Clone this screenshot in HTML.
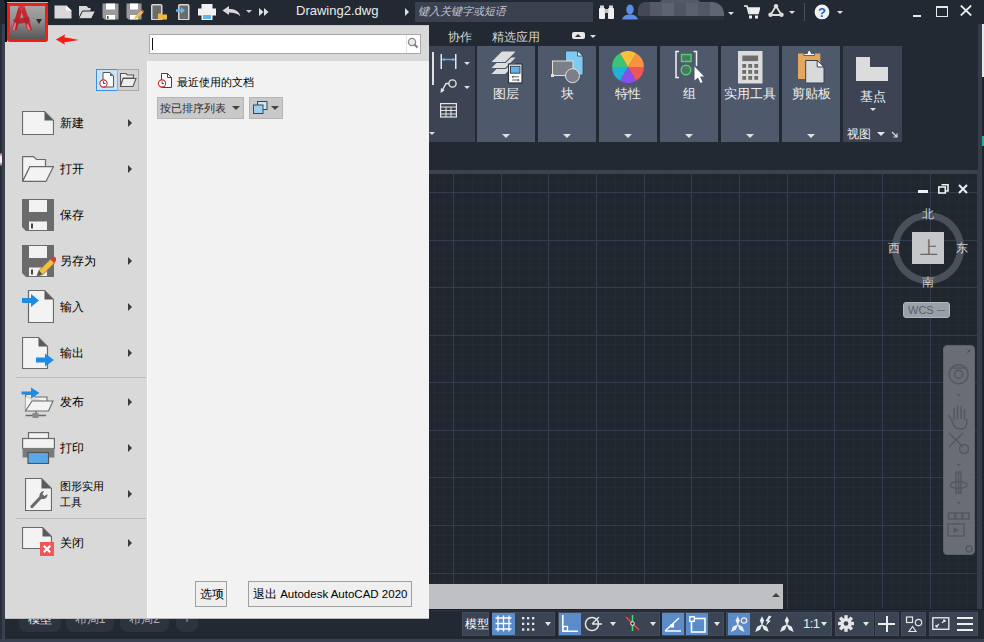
<!DOCTYPE html>
<html><head><meta charset="utf-8"><style>
*{box-sizing:border-box}
html,body{margin:0;padding:0;width:984px;height:642px;overflow:hidden;background:#222733;font-family:"Liberation Sans",sans-serif;font-size:12px}
.a{position:absolute}
.panel{position:absolute;top:46px;height:96px;background:#4e596c}
.plabel{position:absolute;left:0;right:0;top:40px;text-align:center;color:#f0f0f0;font-size:12.5px;line-height:16px;white-space:nowrap}
.pdrop{position:absolute;left:50%;margin-left:-4px;top:88px;width:0;height:0;border-left:4px solid transparent;border-right:4px solid transparent;border-top:4px solid #e0e0e0}
.mi{position:absolute;left:60px;color:#000;font-size:11.5px;line-height:15px;font-weight:500}
.marr{position:absolute;left:128px;width:0;height:0;border-top:4px solid transparent;border-bottom:4px solid transparent;border-left:4px solid #3a3a3a}
.sbg{position:absolute;top:612px;height:24px;background:#3b4453;box-shadow:inset 0 0 0 1px #444c5b}
.sbl{position:absolute;top:613px;height:22px;background:#5b8bc8}
.dd{position:absolute;width:0;height:0;border-left:3px solid transparent;border-right:3px solid transparent;border-top:3px solid #e0e0e0}
.sdd{position:absolute;top:622px;width:0;height:0;border-left:3.5px solid transparent;border-right:3.5px solid transparent;border-top:4px solid #e6e6e6}
</style></head><body>

<div class="a" style="left:0;top:0;width:984px;height:24px;background:#222932"></div>
<div class="a" style="left:0;top:24px;width:984px;height:146px;background:#222932"></div>
<div class="a" style="left:0;top:170px;width:978px;height:4px;background:#3a4250"></div>
<svg class="a" style="left:5px;top:174px" width="973" height="435" shape-rendering="crispEdges"><rect width="973" height="435" fill="#21272f"/><rect x="0" y="0" width="1" height="435" fill="#252a33"/><rect x="10" y="0" width="1" height="435" fill="#252a33"/><rect x="29" y="0" width="1" height="435" fill="#252a33"/><rect x="38" y="0" width="1" height="435" fill="#252a33"/><rect x="48" y="0" width="1" height="435" fill="#252a33"/><rect x="57" y="0" width="1" height="435" fill="#252a33"/><rect x="76" y="0" width="1" height="435" fill="#252a33"/><rect x="86" y="0" width="1" height="435" fill="#252a33"/><rect x="95" y="0" width="1" height="435" fill="#252a33"/><rect x="105" y="0" width="1" height="435" fill="#252a33"/><rect x="124" y="0" width="1" height="435" fill="#252a33"/><rect x="133" y="0" width="1" height="435" fill="#252a33"/><rect x="143" y="0" width="1" height="435" fill="#252a33"/><rect x="153" y="0" width="1" height="435" fill="#252a33"/><rect x="172" y="0" width="1" height="435" fill="#252a33"/><rect x="181" y="0" width="1" height="435" fill="#252a33"/><rect x="191" y="0" width="1" height="435" fill="#252a33"/><rect x="200" y="0" width="1" height="435" fill="#252a33"/><rect x="219" y="0" width="1" height="435" fill="#252a33"/><rect x="229" y="0" width="1" height="435" fill="#252a33"/><rect x="238" y="0" width="1" height="435" fill="#252a33"/><rect x="248" y="0" width="1" height="435" fill="#252a33"/><rect x="267" y="0" width="1" height="435" fill="#252a33"/><rect x="276" y="0" width="1" height="435" fill="#252a33"/><rect x="286" y="0" width="1" height="435" fill="#252a33"/><rect x="295" y="0" width="1" height="435" fill="#252a33"/><rect x="314" y="0" width="1" height="435" fill="#252a33"/><rect x="324" y="0" width="1" height="435" fill="#252a33"/><rect x="334" y="0" width="1" height="435" fill="#252a33"/><rect x="343" y="0" width="1" height="435" fill="#252a33"/><rect x="362" y="0" width="1" height="435" fill="#252a33"/><rect x="372" y="0" width="1" height="435" fill="#252a33"/><rect x="381" y="0" width="1" height="435" fill="#252a33"/><rect x="391" y="0" width="1" height="435" fill="#252a33"/><rect x="410" y="0" width="1" height="435" fill="#252a33"/><rect x="419" y="0" width="1" height="435" fill="#252a33"/><rect x="429" y="0" width="1" height="435" fill="#252a33"/><rect x="438" y="0" width="1" height="435" fill="#252a33"/><rect x="457" y="0" width="1" height="435" fill="#252a33"/><rect x="467" y="0" width="1" height="435" fill="#252a33"/><rect x="476" y="0" width="1" height="435" fill="#252a33"/><rect x="486" y="0" width="1" height="435" fill="#252a33"/><rect x="505" y="0" width="1" height="435" fill="#252a33"/><rect x="514" y="0" width="1" height="435" fill="#252a33"/><rect x="524" y="0" width="1" height="435" fill="#252a33"/><rect x="534" y="0" width="1" height="435" fill="#252a33"/><rect x="553" y="0" width="1" height="435" fill="#252a33"/><rect x="562" y="0" width="1" height="435" fill="#252a33"/><rect x="572" y="0" width="1" height="435" fill="#252a33"/><rect x="581" y="0" width="1" height="435" fill="#252a33"/><rect x="600" y="0" width="1" height="435" fill="#252a33"/><rect x="610" y="0" width="1" height="435" fill="#252a33"/><rect x="619" y="0" width="1" height="435" fill="#252a33"/><rect x="629" y="0" width="1" height="435" fill="#252a33"/><rect x="648" y="0" width="1" height="435" fill="#252a33"/><rect x="657" y="0" width="1" height="435" fill="#252a33"/><rect x="667" y="0" width="1" height="435" fill="#252a33"/><rect x="676" y="0" width="1" height="435" fill="#252a33"/><rect x="695" y="0" width="1" height="435" fill="#252a33"/><rect x="705" y="0" width="1" height="435" fill="#252a33"/><rect x="715" y="0" width="1" height="435" fill="#252a33"/><rect x="724" y="0" width="1" height="435" fill="#252a33"/><rect x="743" y="0" width="1" height="435" fill="#252a33"/><rect x="753" y="0" width="1" height="435" fill="#252a33"/><rect x="762" y="0" width="1" height="435" fill="#252a33"/><rect x="772" y="0" width="1" height="435" fill="#252a33"/><rect x="791" y="0" width="1" height="435" fill="#252a33"/><rect x="800" y="0" width="1" height="435" fill="#252a33"/><rect x="810" y="0" width="1" height="435" fill="#252a33"/><rect x="819" y="0" width="1" height="435" fill="#252a33"/><rect x="838" y="0" width="1" height="435" fill="#252a33"/><rect x="848" y="0" width="1" height="435" fill="#252a33"/><rect x="857" y="0" width="1" height="435" fill="#252a33"/><rect x="867" y="0" width="1" height="435" fill="#252a33"/><rect x="886" y="0" width="1" height="435" fill="#252a33"/><rect x="895" y="0" width="1" height="435" fill="#252a33"/><rect x="905" y="0" width="1" height="435" fill="#252a33"/><rect x="915" y="0" width="1" height="435" fill="#252a33"/><rect x="934" y="0" width="1" height="435" fill="#252a33"/><rect x="943" y="0" width="1" height="435" fill="#252a33"/><rect x="953" y="0" width="1" height="435" fill="#252a33"/><rect x="962" y="0" width="1" height="435" fill="#252a33"/><rect x="0" y="8" width="973" height="1" fill="#252a33"/><rect x="0" y="27" width="973" height="1" fill="#252a33"/><rect x="0" y="37" width="973" height="1" fill="#252a33"/><rect x="0" y="46" width="973" height="1" fill="#252a33"/><rect x="0" y="56" width="973" height="1" fill="#252a33"/><rect x="0" y="75" width="973" height="1" fill="#252a33"/><rect x="0" y="84" width="973" height="1" fill="#252a33"/><rect x="0" y="94" width="973" height="1" fill="#252a33"/><rect x="0" y="104" width="973" height="1" fill="#252a33"/><rect x="0" y="123" width="973" height="1" fill="#252a33"/><rect x="0" y="132" width="973" height="1" fill="#252a33"/><rect x="0" y="142" width="973" height="1" fill="#252a33"/><rect x="0" y="151" width="973" height="1" fill="#252a33"/><rect x="0" y="170" width="973" height="1" fill="#252a33"/><rect x="0" y="180" width="973" height="1" fill="#252a33"/><rect x="0" y="189" width="973" height="1" fill="#252a33"/><rect x="0" y="199" width="973" height="1" fill="#252a33"/><rect x="0" y="218" width="973" height="1" fill="#252a33"/><rect x="0" y="227" width="973" height="1" fill="#252a33"/><rect x="0" y="237" width="973" height="1" fill="#252a33"/><rect x="0" y="246" width="973" height="1" fill="#252a33"/><rect x="0" y="265" width="973" height="1" fill="#252a33"/><rect x="0" y="275" width="973" height="1" fill="#252a33"/><rect x="0" y="285" width="973" height="1" fill="#252a33"/><rect x="0" y="294" width="973" height="1" fill="#252a33"/><rect x="0" y="313" width="973" height="1" fill="#252a33"/><rect x="0" y="323" width="973" height="1" fill="#252a33"/><rect x="0" y="332" width="973" height="1" fill="#252a33"/><rect x="0" y="342" width="973" height="1" fill="#252a33"/><rect x="0" y="361" width="973" height="1" fill="#252a33"/><rect x="0" y="370" width="973" height="1" fill="#252a33"/><rect x="0" y="380" width="973" height="1" fill="#252a33"/><rect x="0" y="389" width="973" height="1" fill="#252a33"/><rect x="0" y="408" width="973" height="1" fill="#252a33"/><rect x="0" y="418" width="973" height="1" fill="#252a33"/><rect x="0" y="427" width="973" height="1" fill="#252a33"/><rect x="19" y="0" width="1" height="435" fill="#353c4e"/><rect x="67" y="0" width="1" height="435" fill="#353c4e"/><rect x="114" y="0" width="1" height="435" fill="#353c4e"/><rect x="162" y="0" width="1" height="435" fill="#353c4e"/><rect x="210" y="0" width="1" height="435" fill="#353c4e"/><rect x="257" y="0" width="1" height="435" fill="#353c4e"/><rect x="305" y="0" width="1" height="435" fill="#353c4e"/><rect x="353" y="0" width="1" height="435" fill="#353c4e"/><rect x="400" y="0" width="1" height="435" fill="#353c4e"/><rect x="448" y="0" width="1" height="435" fill="#353c4e"/><rect x="496" y="0" width="1" height="435" fill="#353c4e"/><rect x="543" y="0" width="1" height="435" fill="#353c4e"/><rect x="591" y="0" width="1" height="435" fill="#353c4e"/><rect x="639" y="0" width="1" height="435" fill="#353c4e"/><rect x="686" y="0" width="1" height="435" fill="#353c4e"/><rect x="734" y="0" width="1" height="435" fill="#353c4e"/><rect x="782" y="0" width="1" height="435" fill="#353c4e"/><rect x="829" y="0" width="1" height="435" fill="#353c4e"/><rect x="877" y="0" width="1" height="435" fill="#353c4e"/><rect x="925" y="0" width="1" height="435" fill="#353c4e"/><rect x="972" y="0" width="1" height="435" fill="#353c4e"/><rect x="0" y="18" width="973" height="1" fill="#353c4e"/><rect x="0" y="66" width="973" height="1" fill="#353c4e"/><rect x="0" y="113" width="973" height="1" fill="#353c4e"/><rect x="0" y="161" width="973" height="1" fill="#353c4e"/><rect x="0" y="208" width="973" height="1" fill="#353c4e"/><rect x="0" y="256" width="973" height="1" fill="#353c4e"/><rect x="0" y="303" width="973" height="1" fill="#353c4e"/><rect x="0" y="351" width="973" height="1" fill="#353c4e"/><rect x="0" y="399" width="973" height="1" fill="#353c4e"/></svg>
<div class="a" style="left:978px;top:24px;width:4px;height:612px;background:#363d4a"></div>
<div class="a" style="left:982px;top:24px;width:2px;height:612px;background:#1f232b"></div>
<div class="a" style="left:982px;top:24px;width:2px;height:53px;background:#e8e8e8"></div>
<div class="a" style="left:982px;top:136px;width:2px;height:10px;background:#20b0a0"></div>
<div class="a" style="left:0;top:609px;width:984px;height:33px;background:#222932"></div>
<div class="a" style="left:429px;top:609px;width:555px;height:1px;background:#1a1e26"></div>
<div class="a" style="left:429px;top:610px;width:549px;height:1px;background:#2c323e"></div>
<div class="a" style="left:0;top:639px;width:984px;height:3px;background:#394050"></div>
<div class="a" style="left:0;top:24px;width:5px;height:615px;background:#282d38"></div>
<div class="a" style="left:1.5px;top:24px;width:3.5px;height:615px;background:#394050"></div>
<div class="a" style="left:0;top:153px;width:1.5px;height:13px;background:linear-gradient(#c04040,#f0f0f0 30%,#f0f0f0 70%,#a03040)"></div>
<svg class="a" style="left:54px;top:5px" width="18" height="14" viewBox="0 0 18 14" ><path d="M0.5 0.5H12.5L17.5 5.5V13.5H0.5Z" fill="#d9d9d9"/><path d="M12 0.5L17.5 5.5H12Z" fill="#ffffff"/></svg>
<svg class="a" style="left:78px;top:5px" width="18" height="15" viewBox="0 0 18 15" ><path d="M1 1H8.5L10.5 3H12.5V7H4.5L1 13Z" fill="#d9d9d9"/><path d="M4.5 6H17.5L13.5 13.8H0.5Z" fill="#d9d9d9" stroke="#1d212a" stroke-width="1"/></svg>
<svg class="a" style="left:102px;top:3px" width="17" height="17" viewBox="0 0 17 17" ><path d="M0.5 0.5H16.5V16.5H2.5L0.5 14.5Z" fill="#9a9a9a"/><rect x="4" y="0.5" width="9" height="6" fill="#fff"/><rect x="4" y="12" width="9" height="4.5" fill="#fff"/><rect x="5" y="13" width="1.5" height="3" fill="#555"/></svg>
<svg class="a" style="left:126px;top:3px" width="18" height="17" viewBox="0 0 18 17" ><path d="M0.5 0.5H15.5V16.5H2.5L0.5 14.5Z" fill="#9a9a9a"/><rect x="4" y="0.5" width="8" height="6" fill="#fff"/><rect x="4" y="12" width="8" height="4.5" fill="#fff"/><path d="M8 16.5L9.5 13L15.5 7.5L17.5 9.5L11.5 15Z" fill="#f0c040"/><path d="M15.5 7.5L16.5 6.5L18 8L17.5 9.5Z" fill="#e04050"/></svg>
<svg class="a" style="left:151px;top:4px" width="17" height="16" viewBox="0 0 17 16" ><rect x="0.75" y="0.75" width="10" height="15" rx="1" fill="#6b6b6b" stroke="#d6d6d6" stroke-width="1.5"/><path d="M7 9.5H10L11 10.5H16V15.5H7Z" fill="#f0b840"/></svg>
<svg class="a" style="left:176px;top:4px" width="14" height="16" viewBox="0 0 14 16" ><rect x="2.75" y="0.75" width="10" height="15" rx="1" fill="#6b6b6b" stroke="#d6d6d6" stroke-width="1.5"/><path d="M0 5.2H5V3L9 6.5L5 10V7.8H0Z" fill="#5fb4f0"/></svg>
<svg class="a" style="left:198px;top:4px" width="18" height="16" viewBox="0 0 18 16" ><rect x="3.5" y="0" width="11" height="5" fill="#f2f2f2"/><rect x="0" y="4.5" width="18" height="7" fill="#f2f2f2"/><rect x="3.5" y="10" width="11" height="6" fill="#f2f2f2"/><rect x="5" y="11" width="8" height="4" fill="#5fb4f0"/></svg>
<svg class="a" style="left:222px;top:6px" width="19" height="11" viewBox="0 0 19 11" ><path d="M0.5 4.5L7 0V3C12 3 17 4.5 18.5 10.5C16 7.5 12 6.5 7 6.5V9Z" fill="#d9d9d9"/></svg>
<div class="dd" style="left:246px;top:10px;border-top-color:#cfcfcf"></div>
<svg class="a" style="left:259px;top:8px" width="10" height="8" viewBox="0 0 10 8" ><path d="M0 0L4.5 4L0 8Z M5 0L9.5 4L5 8Z" fill="#e0e0e0"/></svg>
<div class="a" style="left:296px;top:2px;font-size:13px;line-height:18px;color:#ececec">Drawing2.dwg</div>
<div class="a" style="left:405px;top:8px;width:0;height:0;border-top:4px solid transparent;border-bottom:4px solid transparent;border-left:4.5px solid #e0e0e0"></div>
<div class="a" style="left:415px;top:2px;width:178px;height:20px;background:#3a414f"></div>
<div class="a" style="left:418px;top:4px;font-size:11px;font-style:italic;color:#c4c8d0;line-height:15px">键入关键字或短语</div>
<svg class="a" style="left:599px;top:5px" width="15" height="15" viewBox="0 0 15 15" ><rect x="1" y="0.5" width="4" height="3" fill="#d8d8d8"/><rect x="10" y="0.5" width="4" height="3" fill="#d8d8d8"/><rect x="0" y="3" width="6" height="11" rx="1" fill="#f0f0f0"/><rect x="9" y="3" width="6" height="11" rx="1" fill="#f0f0f0"/><rect x="5.5" y="4" width="4" height="4" fill="#c0c0c0"/></svg>
<svg class="a" style="left:622px;top:4px" width="16" height="16" viewBox="0 0 16 16" ><ellipse cx="8" cy="5.5" rx="3.7" ry="5" fill="#5b8de8"/><path d="M0 15.5C1.5 11.5 4 10.5 8 10.5C12 10.5 14.5 11.5 16 15.5Z" fill="#5b8de8"/></svg>
<div class="a" style="left:638px;top:2px;width:86px;height:14px;border-radius:8px 12px 0 0;background:linear-gradient(90deg,#434956 0px,#434956 12px,#545a66 12px,#545a66 24px,#5d6370 24px,#5d6370 36px,#4f5562 36px,#4f5562 48px,#5a606c 48px,#5a606c 60px,#515764 60px,#515764 72px,#5f6571 72px,#5f6571 86px)"></div>
<div class="a" style="left:660px;top:0px;width:40px;height:3px;background:#535966;border-radius:4px 4px 0 0"></div>
<div class="a" style="left:638px;top:16px;width:86px;height:4px;background:#2a2f3a"></div>
<div class="dd" style="left:728px;top:12px"></div>
<svg class="a" style="left:744px;top:5px" width="16" height="14" viewBox="0 0 16 14" ><path d="M0 1H3L5 8.5H14L15.5 3H4" fill="none" stroke="#eeeeee" stroke-width="1.6"/><path d="M4.5 3H15.5L14 8H5.5Z" fill="#eeeeee"/><rect x="5" y="10.5" width="3" height="3" fill="#eee"/><rect x="11" y="10.5" width="3" height="3" fill="#eee"/></svg>
<svg class="a" style="left:768px;top:4px" width="16" height="13" viewBox="0 0 16 13" ><path d="M8 2L2.5 11H13.5Z" fill="none" stroke="#dcdcdc" stroke-width="1.8"/><circle cx="8" cy="2.3" r="2.2" fill="#dcdcdc"/><circle cx="2.5" cy="10.7" r="2.2" fill="#dcdcdc"/><circle cx="13.5" cy="10.7" r="2.2" fill="#dcdcdc"/></svg>
<div class="dd" style="left:789px;top:11px"></div>
<div class="a" style="left:804px;top:3px;width:1px;height:18px;background:#4a5060"></div>
<svg class="a" style="left:814px;top:4px" width="16" height="16" viewBox="0 0 16 16" ><circle cx="8" cy="7.9" r="7.4" fill="#f2f2f2"/><text x="8" y="12.6" font-family="Liberation Sans" font-weight="bold" font-size="13" fill="#2a5cc8" text-anchor="middle">?</text></svg>
<div class="dd" style="left:837px;top:11px"></div>
<div class="a" style="left:913px;top:15px;width:8px;height:2px;background:#e8e8e8"></div>
<div class="a" style="left:936px;top:6px;width:12px;height:11px;border:1.5px solid #e8e8e8;border-top-width:2px"></div>
<svg class="a" style="left:960px;top:5px" width="12" height="11" viewBox="0 0 12 11" ><path d="M0.8 0.5L11.2 10.5M11.2 0.5L0.8 10.5" stroke="#ececec" stroke-width="1.8"/></svg>
<div class="a" style="left:448px;top:29px;color:#d6d6d6;font-size:12px;line-height:16px">协作</div>
<div class="a" style="left:492px;top:29px;color:#d6d6d6;font-size:12px;line-height:16px">精选应用</div>
<div class="a" style="left:572px;top:32px;width:13px;height:7px;background:#e8e8e8;border-radius:2px"></div>
<div class="a" style="left:575px;top:34px;width:0;height:0;border-left:3.5px solid transparent;border-right:3.5px solid transparent;border-bottom:3px solid #333"></div>
<div class="dd" style="left:590px;top:35px"></div>
<div class="panel" style="left:429px;width:46px;background:#3c4453"></div>
<div class="a" style="left:432px;top:52px;width:1.5px;height:33px;background:#e0e0e0"></div>
<svg class="a" style="left:440px;top:54px" width="18" height="16" viewBox="0 0 18 16" ><rect x="0.5" y="0" width="1.5" height="15" fill="#e6e6e6"/><rect x="15" y="0" width="1.5" height="15" fill="#e6e6e6"/><path d="M2 5.5H15" stroke="#5fb4f0" stroke-width="1.4"/><path d="M2 5.5L4.5 3.8V7.2Z M15 5.5L12.5 3.8V7.2Z" fill="#5fb4f0"/></svg>
<div class="dd" style="left:464px;top:62px"></div>
<svg class="a" style="left:440px;top:79px" width="18" height="15" viewBox="0 0 18 15" ><circle cx="12.5" cy="4.5" r="3.6" fill="none" stroke="#e6e6e6" stroke-width="1.4"/><path d="M9 4.5H6L2 12" fill="none" stroke="#e6e6e6" stroke-width="1.4"/><path d="M0.5 14L1 9L4.5 11.5Z" fill="#e6e6e6"/></svg>
<div class="dd" style="left:464px;top:86px"></div>
<svg class="a" style="left:440px;top:103px" width="17" height="15" viewBox="0 0 17 15" ><rect x="0.6" y="0.6" width="15.8" height="13.4" fill="none" stroke="#e6e6e6" stroke-width="1.2"/><path d="M0.6 4H16.4M0.6 7.5H16.4M0.6 11H16.4M6 4V14M11 4V14" stroke="#e6e6e6" stroke-width="1"/></svg>
<div class="dd" style="left:429px;top:132px"></div>
<div class="panel" style="left:477px;width:58px"><div class="plabel">图层</div><div class="pdrop"></div></div>
<div class="panel" style="left:538px;width:58px"><div class="plabel">块</div><div class="pdrop"></div></div>
<div class="panel" style="left:599px;width:58px"><div class="plabel">特性</div><div class="pdrop"></div></div>
<div class="panel" style="left:660px;width:58px"><div class="plabel">组</div><div class="pdrop"></div></div>
<div class="panel" style="left:721px;width:58px"><div class="plabel">实用工具</div><div class="pdrop"></div></div>
<div class="panel" style="left:782px;width:58px"><div class="plabel">剪贴板</div><div class="pdrop"></div></div>
<div class="panel" style="left:843px;width:59px;background:#3c4453"><div class="plabel" style="top:43px">基点</div></div>
<div class="dd" style="left:870px;top:108px"></div>
<div class="a" style="left:847px;top:126px;color:#eeeeee;font-size:12px;line-height:16px">视图</div>
<div class="a" style="left:877px;top:132px;width:0;height:0;border-left:4px solid transparent;border-right:4px solid transparent;border-top:4px solid #e6e6e6"></div>
<svg class="a" style="left:891px;top:131px" width="7" height="7" viewBox="0 0 7 7" ><path d="M1 1L6 6M6 2.5V6H2.5" fill="none" stroke="#dcdcdc" stroke-width="1.2"/></svg>
<svg class="a" style="left:489px;top:50px" width="35" height="35" viewBox="0 0 35 35" shape-rendering="geometricPrecision"><path d="M1 24.5L12.5 13H28L16.5 24.5Z" fill="#dedede" stroke="#4e596c" stroke-width="1.2"/>
<path d="M1 18.5L12.5 7H28L16.5 18.5Z" fill="#dedede" stroke="#4e596c" stroke-width="1.2"/>
<path d="M1 12.5L12.5 1H28L16.5 12.5Z" fill="#dedede" stroke="#4e596c" stroke-width="1.2"/>
<rect x="19.5" y="14" width="13.5" height="19" fill="#ffffff" stroke="#2e333c" stroke-width="1.2"/>
<rect x="21.5" y="16.2" width="9.5" height="7" fill="#5fb4f0" stroke="#2e333c" stroke-width="0.9"/>
<path d="M23 26.8H30M30 30H23" stroke="#555" stroke-width="0.9"/><path d="M22.5 26.8L24.3 25.4V28.2Z M30.5 30L28.7 28.6V31.4Z" fill="#555"/></svg>
<svg class="a" style="left:550px;top:50px" width="36" height="35" viewBox="0 0 36 35" ><path d="M15.5 1H27.5L33 6V25H15.5Z" fill="#7fcaf5" stroke="#3a4150" stroke-width="0.8"/>
<path d="M27.5 1V6H33Z" fill="#e8f4fa" stroke="#3a4150" stroke-width="0.8"/>
<rect x="2.5" y="11" width="20.5" height="14.5" fill="#7a7f88" stroke="#e8e0d4" stroke-width="1"/>
<circle cx="22.5" cy="25.7" r="7" fill="#7a7f88" stroke="#e8e0d4" stroke-width="1"/>
<rect x="1" y="24" width="3" height="3" fill="#e8e0d4"/></svg>
<svg class="a" style="left:612px;top:51px" width="32" height="32" viewBox="0 0 32 32" ><path d="M16 16L23.95 2.23A15.9 15.9 0 0 1 31.90 16.00Z" fill="#fb9240"/><path d="M16 16L31.90 16.00A15.9 15.9 0 0 1 23.95 29.77Z" fill="#ee5555"/><path d="M16 16L23.95 29.77A15.9 15.9 0 0 1 8.05 29.77Z" fill="#8b4df0"/><path d="M16 16L8.05 29.77A15.9 15.9 0 0 1 0.10 16.00Z" fill="#20b2d8"/><path d="M16 16L0.10 16.00A15.9 15.9 0 0 1 8.05 2.23Z" fill="#3ec47a"/><path d="M16 16L8.05 2.23A15.9 15.9 0 0 1 23.95 2.23Z" fill="#fbbf3a"/></svg>
<svg class="a" style="left:674px;top:50px" width="32" height="34" viewBox="0 0 32 34" ><path d="M5 1.5H2V27.5H5" fill="none" stroke="#f2f2f2" stroke-width="1.5"/>
<path d="M19.5 1.5H22.5V16" fill="none" stroke="#f2f2f2" stroke-width="1.5"/>
<rect x="7.5" y="4.5" width="9.5" height="7" fill="#4f7864" stroke="#4ad46a" stroke-width="1.4"/>
<circle cx="12" cy="20" r="4.8" fill="#4f7864" stroke="#4ad46a" stroke-width="1.4"/>
<path d="M20.5 16.5L30 26.5L26 26.5L28.5 32L26.5 33L24 27.5L20.5 30.5Z" fill="#ffffff"/></svg>
<svg class="a" style="left:738px;top:50.5px" width="25" height="33" viewBox="0 0 25 33" ><rect x="0" y="0" width="24.5" height="32.5" fill="#dcdcdc"/><rect x="4.3" y="4.5" width="15.8" height="5.6" fill="#6e6e6e"/><rect x="4.3" y="13" width="3.8" height="3.8" fill="#6e6e6e"/><rect x="4.3" y="19" width="3.8" height="3.8" fill="#6e6e6e"/><rect x="4.3" y="25" width="3.8" height="3.8" fill="#6e6e6e"/><rect x="10.3" y="13" width="3.8" height="3.8" fill="#6e6e6e"/><rect x="10.3" y="19" width="3.8" height="3.8" fill="#6e6e6e"/><rect x="10.3" y="25" width="3.8" height="3.8" fill="#6e6e6e"/><rect x="16.3" y="13" width="3.8" height="3.8" fill="#6e6e6e"/><rect x="16.3" y="19" width="3.8" height="3.8" fill="#6e6e6e"/><rect x="16.3" y="25" width="3.8" height="3.8" fill="#6e6e6e"/></svg>
<svg class="a" style="left:797px;top:50px" width="28" height="34" viewBox="0 0 28 34" ><rect x="1" y="3.5" width="22.3" height="25.5" fill="#e2a862"/>
<path d="M7 5.5V3.5H10.5C10.5 1.5 11.5 0.5 12.3 0.5C13.1 0.5 14.1 1.5 14.1 3.5H17.5V5.5Z" fill="#fafafa" stroke="#3a4150" stroke-width="0.8"/>
<path d="M8.7 10.5H20.2L27 17V33H8.7Z" fill="#d9d9d9" stroke="#3a4150" stroke-width="1"/>
<path d="M20.2 10.5V17H27Z" fill="#ffffff" stroke="#3a4150" stroke-width="1"/></svg>
<svg class="a" style="left:856px;top:57px" width="32" height="25" viewBox="0 0 32 25" ><path d="M0 0H14V10H32V24H0Z" fill="#dcdcdc"/></svg>
<div class="sbg" style="left:462px;width:27px"></div>
<div class="a" style="left:465px;top:616px;color:#ffffff;font-size:12px;line-height:16px">模型</div>
<div class="sbg" style="left:492px;width:63px"></div>
<div class="sbl" style="left:492px;width:23px"></div>
<svg class="a" style="left:495px;top:615px" width="18" height="18" viewBox="0 0 18 18" ><path d="M3 0.5V16.5M8.5 0.5V16.5M14 0.5V16.5M0.5 3H16.5M0.5 8.5H16.5M0.5 14H16.5" stroke="#ffffff" stroke-width="1.3"/></svg>
<svg class="a" style="left:522px;top:617px" width="14" height="14" viewBox="0 0 14 14" ><rect x="0" y="0.0" width="2.3" height="2.3" fill="#e8e8e8"/><rect x="0" y="5.7" width="2.3" height="2.3" fill="#e8e8e8"/><rect x="0" y="11.4" width="2.3" height="2.3" fill="#e8e8e8"/><rect x="5" y="0.0" width="2.3" height="2.3" fill="#e8e8e8"/><rect x="5" y="5.7" width="2.3" height="2.3" fill="#e8e8e8"/><rect x="5" y="11.4" width="2.3" height="2.3" fill="#e8e8e8"/><rect x="10" y="0.0" width="2.3" height="2.3" fill="#e8e8e8"/><rect x="10" y="5.7" width="2.3" height="2.3" fill="#e8e8e8"/><rect x="10" y="11.4" width="2.3" height="2.3" fill="#e8e8e8"/></svg>
<div class="sdd" style="left:545px"></div>
<div class="sbg" style="left:558px;width:102px"></div>
<div class="sbl" style="left:559px;width:22px"></div>
<svg class="a" style="left:561px;top:615px" width="18" height="18" viewBox="0 0 18 18" ><path d="M1.8 0V16.2H17" fill="none" stroke="#fff" stroke-width="1.6"/><rect x="1.8" y="11.5" width="4.7" height="4.7" fill="none" stroke="#fff" stroke-width="1.3"/></svg>
<svg class="a" style="left:584px;top:615px" width="20" height="17" viewBox="0 0 20 17" ><circle cx="8" cy="9" r="6.6" fill="none" stroke="#e6e6e6" stroke-width="1.5"/><path d="M8 9H18M8 9L15 2" stroke="#e6e6e6" stroke-width="1.4"/></svg>
<div class="sdd" style="left:610px"></div>
<svg class="a" style="left:625px;top:615px" width="16" height="17" viewBox="0 0 16 17" ><path d="M7.5 0V16" stroke="#44dd66" stroke-width="1.5"/><path d="M1 2L14 15" stroke="#ee4444" stroke-width="1.5"/><circle cx="7.5" cy="8.5" r="1.8" fill="#262c38" stroke="#fff" stroke-width="1"/></svg>
<div class="sdd" style="left:650px"></div>
<div class="sbg" style="left:662px;width:62px"></div>
<div class="sbl" style="left:662px;width:22px"></div>
<svg class="a" style="left:664px;top:616px" width="18" height="16" viewBox="0 0 18 16" ><path d="M1 15H17M1 15L15 2" stroke="#fff" stroke-width="1.5"/><rect x="6.5" y="8" width="3.5" height="3.5" fill="#fff"/></svg>
<div class="sbl" style="left:686px;width:22px"></div>
<svg class="a" style="left:689px;top:616px" width="17" height="17" viewBox="0 0 17 17" ><rect x="2.5" y="2.5" width="13.5" height="13.5" fill="none" stroke="#fff" stroke-width="1.6"/><rect x="0.8" y="0.8" width="4.5" height="4.5" fill="#5b8bc8" stroke="#fff" stroke-width="1.4"/></svg>
<div class="sdd" style="left:714px"></div>
<div class="sbg" style="left:726px;width:106px"></div>
<div class="sbl" style="left:728px;width:22px"></div>
<svg class="a" style="left:726px;top:610px" width="74" height="26" viewBox="0 0 74 26" ><path d="M11.70 15.38L13.80 10.45L11.70 6.20L9.60 10.45Z" fill="#ececec"/><path d="M12.24 14.12L6.77 16.86L4.90 21.90L9.83 19.74Z" fill="#ececec"/><path d="M11.16 14.12L13.57 19.74L18.50 21.90L16.63 16.86Z" fill="#ececec"/><circle cx="18" cy="10.5" r="2.7" fill="none" stroke="#ececec" stroke-width="1.2"/><path d="M36.00 15.38L38.10 10.45L36.00 6.20L33.90 10.45Z" fill="#ececec"/><path d="M36.54 14.12L31.07 16.86L29.20 21.90L34.13 19.74Z" fill="#ececec"/><path d="M35.46 14.12L37.87 19.74L42.80 21.90L40.93 16.86Z" fill="#ececec"/><path d="M43 5.5L45.5 6.5L42.5 10.2L44.8 10.8L40 15.5L41.5 11.5L39.5 11Z" fill="#ececec"/><path d="M60.90 15.38L63.00 10.45L60.90 6.20L58.80 10.45Z" fill="#ececec"/><path d="M61.44 14.12L55.97 16.86L54.10 21.90L59.03 19.74Z" fill="#ececec"/><path d="M60.36 14.12L62.77 19.74L67.70 21.90L65.83 16.86Z" fill="#ececec"/></svg>
<div class="a" style="left:803px;top:615px;color:#ececec;font-size:13px;line-height:17px;letter-spacing:-0.5px">1:1</div>
<div class="sdd" style="left:821px"></div>
<div class="sbg" style="left:835px;width:39px"></div>
<svg class="a" style="left:838px;top:615px" width="16" height="17" viewBox="0 0 16 17" ><g transform="translate(0,0.5)"><rect x="6.3" y="-0.3" width="3.4" height="3.6" fill="#e6e6e6" transform="rotate(0 8 8)"/><rect x="6.3" y="-0.3" width="3.4" height="3.6" fill="#e6e6e6" transform="rotate(45 8 8)"/><rect x="6.3" y="-0.3" width="3.4" height="3.6" fill="#e6e6e6" transform="rotate(90 8 8)"/><rect x="6.3" y="-0.3" width="3.4" height="3.6" fill="#e6e6e6" transform="rotate(135 8 8)"/><rect x="6.3" y="-0.3" width="3.4" height="3.6" fill="#e6e6e6" transform="rotate(180 8 8)"/><rect x="6.3" y="-0.3" width="3.4" height="3.6" fill="#e6e6e6" transform="rotate(225 8 8)"/><rect x="6.3" y="-0.3" width="3.4" height="3.6" fill="#e6e6e6" transform="rotate(270 8 8)"/><rect x="6.3" y="-0.3" width="3.4" height="3.6" fill="#e6e6e6" transform="rotate(315 8 8)"/><circle cx="8" cy="8" r="5.6" fill="#e6e6e6"/><circle cx="8" cy="8" r="2.3" fill="#3a4151"/></g></svg>
<div class="sdd" style="left:863px"></div>
<div class="sbg" style="left:875px;width:24px"></div>
<div class="a" style="left:878px;top:623px;width:17px;height:2px;background:#ececec"></div>
<div class="a" style="left:886px;top:616px;width:2px;height:16px;background:#ececec"></div>
<div class="sbg" style="left:901px;width:25px"></div>
<svg class="a" style="left:905px;top:616px" width="20" height="17" viewBox="0 0 20 17" ><rect x="1.5" y="1" width="6" height="5.5" fill="none" stroke="#e6e6e6" stroke-width="1.2"/><circle cx="13.5" cy="6.5" r="3.2" fill="none" stroke="#e6e6e6" stroke-width="1.2"/><path d="M7.5 10.5L4 15.5H11Z" fill="none" stroke="#e6e6e6" stroke-width="1.2"/></svg>
<div class="sbg" style="left:929px;width:49px"></div>
<svg class="a" style="left:932px;top:617px" width="18" height="14" viewBox="0 0 18 14" ><rect x="0.8" y="0.8" width="16" height="11.5" fill="none" stroke="#e6e6e6" stroke-width="1.4"/><path d="M4 10L7 7M4 10V8M4 10H6M13 3L10 6M13 3V5M13 3H11" stroke="#e6e6e6" stroke-width="1.2"/></svg>
<div class="a" style="left:957px;top:617px;width:16px;height:2px;background:#f0f0f0"></div>
<div class="a" style="left:957px;top:623px;width:16px;height:2px;background:#f0f0f0"></div>
<div class="a" style="left:957px;top:629px;width:16px;height:2px;background:#f0f0f0"></div>
<div class="a" style="left:429px;top:584px;width:354px;height:25px;background:#bfc0c3"></div>
<div class="a" style="left:772px;top:593px;width:0;height:0;border-left:4px solid transparent;border-right:4px solid transparent;border-bottom:4px solid #444"></div>
<div class="a" style="left:19px;top:611px;width:42px;height:21px;background:#2d333f;border-radius:0 0 8px 8px;color:#f0f0f0;text-align:center;font-size:12px;line-height:17px;overflow:hidden">模型</div>
<div class="a" style="left:66px;top:611px;width:48px;height:21px;background:#2d333f;border-radius:0 0 8px 8px;color:#b0b4bc;text-align:center;font-size:12px;line-height:17px;overflow:hidden">布局1</div>
<div class="a" style="left:120px;top:611px;width:49px;height:21px;background:#2d333f;border-radius:0 0 8px 8px;color:#b0b4bc;text-align:center;font-size:12px;line-height:17px;overflow:hidden">布局2</div>
<div class="a" style="left:176px;top:611px;width:22px;height:21px;background:#2d333f;border-radius:0 0 8px 8px;color:#b0b4bc;text-align:center;font-size:12px;line-height:17px;overflow:hidden">+</div>
<div class="a" style="left:918px;top:190px;width:10px;height:3px;background:#f0f0f0"></div>
<svg class="a" style="left:938px;top:184px" width="11" height="10" viewBox="0 0 11 10" ><rect x="0.8" y="3" width="6.5" height="6" fill="none" stroke="#f0f0f0" stroke-width="1.6"/><path d="M3.5 0.8H10V7H7.5" fill="none" stroke="#f0f0f0" stroke-width="1.6"/></svg>
<svg class="a" style="left:958px;top:184px" width="10" height="10" viewBox="0 0 10 10" ><path d="M1 1L9 9M9 1L1 9" stroke="#f0f0f0" stroke-width="2"/></svg>
<div class="a" style="left:892px;top:212px;width:72px;height:72px;border-radius:50%;border:7px solid #4b505b"></div>
<div class="a" style="left:912px;top:232px;width:32px;height:32px;background:#c5c7cb"></div>
<div class="a" style="left:912px;top:237px;width:33px;text-align:center;color:#64676e;font-family:'Liberation Serif',serif;font-size:18px;line-height:22px">上</div>
<div class="a" style="left:921px;top:207px;width:14px;text-align:center;color:#d0d0d0;font-family:'Liberation Serif',serif;font-size:12px;line-height:14px">北</div>
<div class="a" style="left:887px;top:241px;width:14px;text-align:center;color:#d0d0d0;font-family:'Liberation Serif',serif;font-size:12px;line-height:14px">西</div>
<div class="a" style="left:955px;top:241px;width:14px;text-align:center;color:#d0d0d0;font-family:'Liberation Serif',serif;font-size:12px;line-height:14px">东</div>
<div class="a" style="left:921px;top:275px;width:14px;text-align:center;color:#d0d0d0;font-family:'Liberation Serif',serif;font-size:12px;line-height:14px">南</div>
<div class="a" style="left:903px;top:302px;width:47px;height:16px;background:#9ba0a8;border-radius:3px;border:1px solid #b4b8be"></div>
<div class="a" style="left:908px;top:303px;color:#5a5e66;font-size:11px;line-height:14px">WCS</div>
<div class="a" style="left:937px;top:310px;width:8px;height:1px;background:#6a6e76"></div>
<div class="a" style="left:943px;top:345px;width:32px;height:210px;background:rgba(108,112,121,.96);border:1px solid #5c6068;border-radius:4px"></div>
<svg class="a" style="left:943px;top:345px" width="32" height="212" viewBox="0 0 32 212" ><g fill="none" stroke="#53575f" stroke-width="1.4">
<circle cx="15.6" cy="29.3" r="9.5"/><circle cx="15.6" cy="29.3" r="4"/><path d="M7 23H24"/>
<path d="M9.5 77C8 73 6 72 5.5 70M11 75V63M14.5 74V60M18 74V61M21.5 75V64M9.5 77C11 82 14 84 17 84H19C22 84 24 80 24 74"/>
<path d="M6 88L20 102M20 88L6 102"/><circle cx="21" cy="104" r="4.5"/>
<path d="M15.6 127V149"/><rect x="13" y="127" width="5" height="21"/><ellipse cx="15.6" cy="140" rx="8.5" ry="3.5"/>
<rect x="5.5" y="168" width="6" height="6"/><rect x="12.8" y="168" width="6" height="6"/><rect x="20" y="168" width="6" height="6"/>
<rect x="5" y="179" width="16" height="12"/>
<circle cx="26" cy="204" r="3"/><path d="M24 4L28 8M28 4L24 8" stroke-width="1"/>
</g>
<path d="M10.5 185L16 182V188Z" fill="#53575f" transform="rotate(180 13.25 185)"/>
<path d="M13.6 49L17.6 49L15.6 51.5Z M13.6 119L17.6 119L15.6 121.5Z M13.6 157L17.6 157L15.6 159.5Z" fill="#53575f"/></svg>
<div class="a" style="left:5px;top:25px;width:424px;height:594px;background:#d9d9d9;box-shadow:none"></div>
<div class="a" style="left:147px;top:61px;width:282px;height:558px;background:#f2f2f2;border-left:1px solid #fbfbfb"></div>
<div class="a" style="left:5px;top:618px;width:424px;height:1px;background:#b9b9b9"></div>
<div class="a" style="left:47px;top:25px;width:382px;height:1px;background:#c6c6c6"></div>
<div class="a" style="left:149px;top:34px;width:272px;height:20px;background:#ffffff;border:1px solid #a9a9a9"></div>
<div class="a" style="left:406px;top:35px;width:1px;height:18px;background:#e4e4e4"></div>
<svg class="a" style="left:407px;top:37px" width="12" height="13" viewBox="0 0 12 13" ><circle cx="5" cy="5" r="3.6" fill="#e4eef2" stroke="#8a8a8a" stroke-width="1.3"/><path d="M7.5 7.5L10.5 10.5" stroke="#7a7a7a" stroke-width="2"/></svg>
<div class="a" style="left:152px;top:38px;width:1px;height:12px;background:#111"></div>
<div class="a" style="left:4px;top:0px;width:46px;height:2px;background:#0e1014"></div>
<div class="a" style="left:5px;top:2px;width:1.5px;height:40px;background:#0e1014"></div>
<div class="a" style="left:6.5px;top:2px;width:41px;height:1px;background:#b8b8b8"></div>
<div class="a" style="left:6.5px;top:3px;width:41px;height:39px;border:3.3px solid #f41c18;border-radius:3px;background:linear-gradient(#a6a6a6,#909090 45%,#6a6a6a 80%,#575757)"></div>
<svg class="a" style="left:0px;top:0px" width="46" height="44" viewBox="0 0 46 44" ><path d="M11.5 30.2L18.7 6.5H23.2L16.8 30.2Z" fill="#c0242c"/><path d="M19.8 6.5H24.6L32.4 30.2H27.4Z" fill="#c52a34"/><path d="M13.2 19.5L28.8 16.8L30.2 22L14.4 24.6Z" fill="#b42028" opacity=".9"/><path d="M12.3 30L14.6 22.5L16.3 22.8L14.8 30Z" fill="#f29098" opacity=".75"/><path d="M27.8 29.8L26.6 24.5L28.3 24.3L30.5 29.8Z" fill="#f29098" opacity=".7"/><path d="M18.7 6.5L24.6 6.5L22 11L20.5 11Z" fill="#d43840"/></svg>
<div class="a" style="left:36px;top:19px;width:0;height:0;border-left:3.6px solid transparent;border-right:3.6px solid transparent;border-top:5px solid #2a2a2a"></div>
<svg class="a" style="left:55px;top:33px" width="25" height="13" viewBox="0 0 25 13" ><path d="M0.9 6.6L10.3 1.2L9.3 4.3L15 5.2L23.9 7.1L15 8.4L9.3 9.2L10 11.8Z" fill="#f01e16"/></svg>
<div class="a" style="left:96px;top:69px;width:22px;height:22px;background:#cfe3f8;border:1px solid #3d8ee8"></div>
<div class="a" style="left:117px;top:69px;width:22px;height:22px;background:#d2d2d2;border:1px solid #aaaaaa"></div>
<svg class="a" style="left:98px;top:71px" width="18" height="18" viewBox="0 0 18 18" ><path d="M5 1.5H12L15.5 5V16H5Z" fill="#fbfbfb" stroke="#555" stroke-width="1"/><path d="M12 1.5V5H15.5Z" fill="#666"/><g transform="translate(5.5,12.5)"><circle cx="0" cy="0" r="3.6" fill="#fff" stroke="#c03030" stroke-width="1.1"/><path d="M0 -2.2V0H2" stroke="#333" stroke-width="0.9" fill="none"/></g></svg>
<svg class="a" style="left:119px;top:72px" width="18" height="16" viewBox="0 0 18 16" ><path d="M1.5 1.5H7L8.5 3H14.5V6H4.5L1.5 14Z" fill="#eee" stroke="#555" stroke-width="1.1"/><path d="M4 6.5H17L14 14.5H1.5Z" fill="#eee" stroke="#555" stroke-width="1.1"/></svg>
<svg class="a" style="left:22px;top:111px" width="32" height="24" viewBox="0 0 32 24" ><path d="M0.5 0.5H22.5L31.5 9.5V23.5H0.5Z" fill="#f3f3f3" stroke="#6a6a6a" stroke-width="1.2"/><path d="M22.5 0.8V9.5H31.2Z" fill="#5a5a5a"/></svg>
<svg class="a" style="left:22px;top:156px" width="32" height="26" viewBox="0 0 32 26" ><path d="M0.6 25.4V0.6H11.5L14.5 3.5H23.5V10.6H8L0.6 25.4Z" fill="#f3f3f3" stroke="#6a6a6a" stroke-width="1.2"/><path d="M8 10.6H31.4L24 25.4H0.6Z" fill="#f3f3f3" stroke="#6a6a6a" stroke-width="1.2"/></svg>
<svg class="a" style="left:22px;top:199px" width="32" height="32" viewBox="0 0 32 32" ><path d="M0 0H32V32H4L0 28Z" fill="#6b6b6b"/><rect x="7" y="1" width="18" height="12" fill="#f2f2f2"/><rect x="7" y="22.5" width="18" height="8.5" fill="#f2f2f2"/><rect x="9" y="24.5" width="2" height="5" fill="#444"/></svg>
<svg class="a" style="left:22px;top:245px" width="34" height="32" viewBox="0 0 34 32" ><path d="M0 0H32V32H4L0 28Z" fill="#6b6b6b"/><rect x="7" y="1" width="18" height="12" fill="#f2f2f2"/><rect x="7" y="22.5" width="18" height="8.5" fill="#f2f2f2"/><rect x="9" y="24.5" width="2" height="5" fill="#444"/><path d="M15 31L17 25.5L28.5 14L32.5 18L21 29.5Z" fill="#f5c040" stroke="#7a6a50" stroke-width=".8"/><path d="M28.5 14L30.5 12C31.3 11.2 32.3 11.2 33 12L34 13C34.8 13.8 34.8 14.8 34 15.5L32.5 18Z" fill="#e8333a"/><path d="M15 31L17 25.5L20.5 29.2Z" fill="#555"/></svg>
<svg class="a" style="left:22px;top:290px" width="32" height="33" viewBox="0 0 32 33" ><g transform="translate(6,0)"><path d="M0.5 0.5H16.5L25.5 9.5V32.5H0.5Z" fill="#f3f3f3" stroke="#6a6a6a" stroke-width="1.2"/><path d="M16.5 0.8V9.5H25.2Z" fill="#5a5a5a"/></g><path d="M0 8H9V4L17 10.5L9 17V13H0Z" fill="#1e8ce6"/></svg>
<svg class="a" style="left:22px;top:337px" width="32" height="32" viewBox="0 0 32 32" ><g><path d="M0.5 0.5H16.5L25.5 9.5V31.5H0.5Z" fill="#f3f3f3" stroke="#6a6a6a" stroke-width="1.2"/><path d="M16.5 0.8V9.5H25.2Z" fill="#5a5a5a"/></g><path d="M14 20.5H23V16.5L32 23L23 29.5V25.5H14Z" fill="#1e8ce6"/></svg>
<svg class="a" style="left:21px;top:386px" width="34" height="33" viewBox="0 0 34 33" ><path d="M4.5 8.5H12L14 11H26V16" fill="#f3f3f3" stroke="#6a6a6a" stroke-width="1.1"/><path d="M4.5 8.5V25" stroke="#6a6a6a" stroke-width="1.1"/><path d="M4.5 11V25H12V15Z" fill="#f3f3f3"/>
<path d="M11 15H32L27.5 25H4.5Z" fill="#f3f3f3" stroke="#6a6a6a" stroke-width="1.1"/>
<path d="M15 25V27.5M4.5 29.5H25" stroke="#6a6a6a" stroke-width="1.4"/><rect x="11.5" y="27" width="6" height="5" fill="#8a8a8a"/>
<path d="M0.5 5.5H10V1.5L18.5 7L10 12.5V8.5H0.5Z" fill="#1e8ce6"/></svg>
<svg class="a" style="left:22px;top:432px" width="33" height="32" viewBox="0 0 33 32" ><rect x="6.5" y="0.6" width="20" height="11" fill="#f2f2f2" stroke="#6a6a6a" stroke-width="1.2"/><rect x="0.6" y="6.5" width="31.8" height="10" fill="#f2f2f2" stroke="#6a6a6a" stroke-width="1.2"/><rect x="0.6" y="16" width="31.8" height="9.5" fill="#7a7a7a"/><rect x="6" y="20.5" width="20.5" height="11" fill="#5aa8e8" stroke="#555" stroke-width="1.2"/></svg>
<svg class="a" style="left:25px;top:478px" width="27" height="33" viewBox="0 0 27 33" ><path d="M0.5 0.5H16.5L26.5 10.5V32.5H0.5Z" fill="#f3f3f3" stroke="#6a6a6a" stroke-width="1.2"/><path d="M16.5 0.8V10.5H26.2Z" fill="#5a5a5a"/><path d="M7 28.5L16.5 18.5" stroke="#6a6a6a" stroke-width="3.2" stroke-linecap="round"/><path d="M15 20C13.5 16.5 15.5 13.5 19 13L17.5 16.2L19.5 18L22.5 16C22.8 19.5 20 21.8 16.7 21Z" fill="#6a6a6a"/></svg>
<svg class="a" style="left:22px;top:527px" width="33" height="30" viewBox="0 0 33 30" ><path d="M0.5 0.5H20.5L29.5 9.5V21.5H0.5Z" fill="#f3f3f3" stroke="#6a6a6a" stroke-width="1.2"/><path d="M20.5 0.8V9.5H29.2Z" fill="#5a5a5a"/><rect x="18" y="15" width="14" height="14" fill="#f05858"/><path d="M21.8 18.8L28.2 25.2M28.2 18.8L21.8 25.2" stroke="#fff" stroke-width="2.2"/></svg>
<div class="mi" style="top:116px">新建</div>
<div class="marr" style="top:119px"></div>
<div class="mi" style="top:162px">打开</div>
<div class="marr" style="top:165px"></div>
<div class="mi" style="top:208px">保存</div>
<div class="mi" style="top:254px">另存为</div>
<div class="marr" style="top:257px"></div>
<div class="mi" style="top:300px">输入</div>
<div class="marr" style="top:303px"></div>
<div class="mi" style="top:346px">输出</div>
<div class="marr" style="top:349px"></div>
<div class="mi" style="top:395px">发布</div>
<div class="marr" style="top:398px"></div>
<div class="mi" style="top:441px">打印</div>
<div class="marr" style="top:444px"></div>
<div class="mi" style="top:536px">关闭</div>
<div class="marr" style="top:539px"></div>
<div class="mi" style="top:478px;font-size:11px;line-height:16px">图形实用<br>工具</div>
<div class="marr" style="top:490px"></div>
<div class="a" style="left:16px;top:377px;width:130px;height:1px;background:#bdbdbd"></div>
<div class="a" style="left:16px;top:518px;width:130px;height:1px;background:#bdbdbd"></div>
<svg class="a" style="left:157px;top:73px" width="16" height="16" viewBox="0 0 16 16" ><path d="M4.5 0.5H10.5L14.5 4.5V14.5H4.5Z" fill="#fbfbfb" stroke="#444" stroke-width="1"/><path d="M10.5 0.5V4.5H14.5" fill="none" stroke="#444" stroke-width="1"/><g transform="translate(5,10.5)"><circle cx="0" cy="0" r="3.6" fill="#fff" stroke="#c03030" stroke-width="1.1"/><path d="M0 -2.2V0H2" stroke="#333" stroke-width="0.9" fill="none"/></g></svg>
<div class="a" style="left:177px;top:75px;color:#000;font-size:11px;line-height:15px;font-weight:500">最近使用的文档</div>
<div class="a" style="left:157px;top:97px;width:87px;height:22px;background:#c9c9c9;border:1px solid #b5b5b5"></div>
<div class="a" style="left:160px;top:101px;color:#2a2a2a;font-size:11px;line-height:15px;font-weight:500">按已排序列表</div>
<div class="a" style="left:232px;top:106px;width:0;height:0;border-left:4px solid transparent;border-right:4px solid transparent;border-top:4px solid #444"></div>
<div class="a" style="left:249px;top:97px;width:34px;height:22px;background:#c9c9c9;border:1px solid #b5b5b5"></div>
<svg class="a" style="left:253px;top:101px" width="15" height="13" viewBox="0 0 15 13" ><rect x="4.5" y="0.5" width="9.5" height="8" fill="#cce4f7" stroke="#444" stroke-width="1"/><rect x="0.5" y="4" width="9.5" height="8.5" fill="#9ccff2" stroke="#444" stroke-width="1"/></svg>
<div class="a" style="left:271px;top:106px;width:0;height:0;border-left:4px solid transparent;border-right:4px solid transparent;border-top:4px solid #444"></div>
<div class="a" style="left:195px;top:581px;width:32px;height:26px;background:#efefef;border:1px solid #a0a0a0"></div>
<div class="a" style="left:200px;top:587px;color:#000;font-size:11.5px;line-height:15px;font-weight:500">选项</div>
<div class="a" style="left:248px;top:581px;width:164px;height:26px;background:#efefef;border:1px solid #a0a0a0"></div>
<div class="a" style="left:253px;top:587px;color:#000;font-size:11.5px;line-height:15px">退出 Autodesk AutoCAD 2020</div>
</body></html>
